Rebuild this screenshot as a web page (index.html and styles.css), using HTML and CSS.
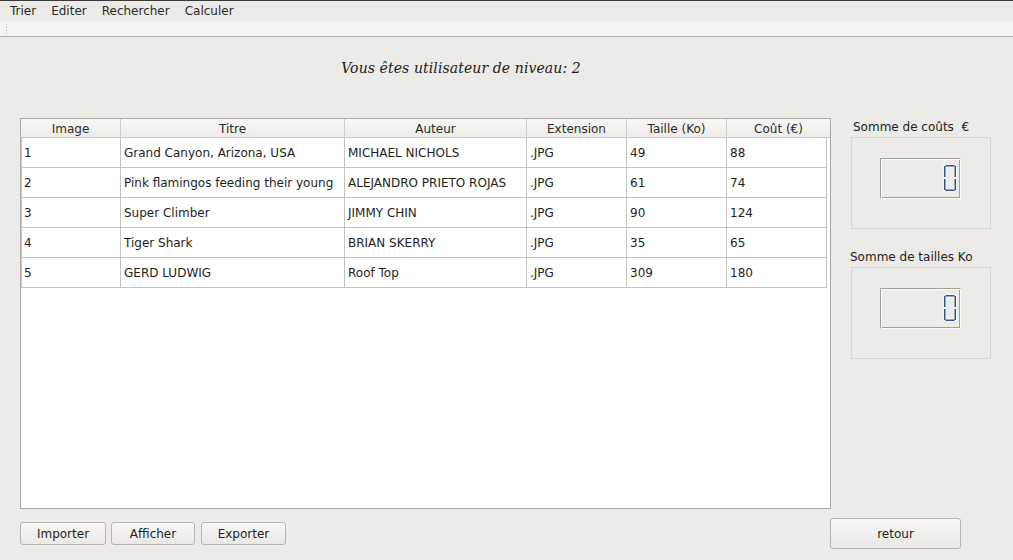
FILE: index.html
```html
<!DOCTYPE html>
<html lang="fr">
<head>
<meta charset="utf-8">
<title>Images</title>
<link rel="stylesheet" href="styles.css">
</head>
<body>
<div class="topline"></div>
<div class="menubar">
  <span class="menu">Trier</span>
  <span class="menu">Editer</span>
  <span class="menu">Rechercher</span>
  <span class="menu">Calculer</span>
</div>
<div class="toolbar"><div class="handle"></div></div>
<div class="main">
  <div class="heading">Vous êtes utilisateur de niveau: 2</div>
  <div class="content">
    <div class="frame">
      <div class="thead">
        <div class="th c1">Image</div>
        <div class="th c2">Titre</div>
        <div class="th c3">Auteur</div>
        <div class="th c4">Extension</div>
        <div class="th c5">Taille (Ko)</div>
        <div class="th c6">Coût (€)</div>
      </div>
      <div class="row"><div class="td c1">1</div><div class="td c2">Grand Canyon, Arizona, USA</div><div class="td c3">MICHAEL NICHOLS</div><div class="td c4">.JPG</div><div class="td c5">49</div><div class="td c6">88</div></div>
      <div class="row"><div class="td c1">2</div><div class="td c2">Pink flamingos feeding their young</div><div class="td c3">ALEJANDRO PRIETO ROJAS</div><div class="td c4">.JPG</div><div class="td c5">61</div><div class="td c6">74</div></div>
      <div class="row"><div class="td c1">3</div><div class="td c2">Super Climber</div><div class="td c3">JIMMY CHIN</div><div class="td c4">.JPG</div><div class="td c5">90</div><div class="td c6">124</div></div>
      <div class="row"><div class="td c1">4</div><div class="td c2">Tiger Shark</div><div class="td c3">BRIAN SKERRY</div><div class="td c4">.JPG</div><div class="td c5">35</div><div class="td c6">65</div></div>
      <div class="row"><div class="td c1">5</div><div class="td c2">GERD LUDWIG</div><div class="td c3">Roof Top</div><div class="td c4">.JPG</div><div class="td c5">309</div><div class="td c6">180</div></div>
    </div>
    <div class="side">
      <div class="label l1">Somme de coûts&nbsp; €</div>
      <div class="group">
        <div class="lcd">
          <svg class="digit" width="14" height="28" viewBox="0 0 14 28">
            <g fill="#f6f6f6">
              <rect x="1.5" y="0" width="11" height="3.5"/>
              <rect x="0" y="1" width="3.5" height="13"/>
              <rect x="10.5" y="1" width="3.5" height="13"/>
              <rect x="0" y="14" width="3.5" height="13"/>
              <rect x="10.5" y="14" width="3.5" height="13"/>
              <rect x="1.5" y="24.5" width="11" height="3.5"/>
            </g>
            <g fill="#2d5590">
              <rect x="2.5" y="1" width="9" height="1.5"/>
              <rect x="1" y="2" width="1.5" height="11"/>
              <rect x="11.5" y="2" width="1.5" height="11"/>
              <rect x="1" y="15" width="1.5" height="11"/>
              <rect x="11.5" y="15" width="1.5" height="11"/>
              <rect x="2.5" y="25.5" width="9" height="1.5"/>
            </g>
          </svg>
        </div>
      </div>
      <div class="label l2">Somme de tailles Ko</div>
      <div class="group">
        <div class="lcd">
          <svg class="digit" width="14" height="28" viewBox="0 0 14 28">
            <g fill="#f6f6f6">
              <rect x="1.5" y="0" width="11" height="3.5"/>
              <rect x="0" y="1" width="3.5" height="13"/>
              <rect x="10.5" y="1" width="3.5" height="13"/>
              <rect x="0" y="14" width="3.5" height="13"/>
              <rect x="10.5" y="14" width="3.5" height="13"/>
              <rect x="1.5" y="24.5" width="11" height="3.5"/>
            </g>
            <g fill="#2d5590">
              <rect x="2.5" y="1" width="9" height="1.5"/>
              <rect x="1" y="2" width="1.5" height="11"/>
              <rect x="11.5" y="2" width="1.5" height="11"/>
              <rect x="1" y="15" width="1.5" height="11"/>
              <rect x="11.5" y="15" width="1.5" height="11"/>
              <rect x="2.5" y="25.5" width="9" height="1.5"/>
            </g>
          </svg>
        </div>
      </div>
    </div>
  </div>
  <div class="bottom">
    <div class="btns">
      <button class="btn b1">Importer</button>
      <button class="btn b2">Afficher</button>
      <button class="btn b3">Exporter</button>
    </div>
    <button class="btn retour">retour</button>
  </div>
</div>
</body>
</html>
```

FILE: styles.css
```css
* { box-sizing: border-box; }
html, body { margin: 0; padding: 0; }
body {
  width: 1013px;
  height: 560px;
  overflow: hidden;
  background: #edebe7;
  font-family: "DejaVu Sans", sans-serif;
  font-size: 12px;
  color: #1e1e1e;
}
.topline { height: 1px; background: #3a3a3a; }
.menubar {
  height: 20px;
  display: flex;
  align-items: center;
  gap: 15px;
  padding-left: 10px;
  background: #edebe7;
}
.menu { color: #2a2a2a; }
.toolbar {
  height: 16px;
  background: #f5f3f0;
  border-bottom: 1px solid #b3afaa;
  padding: 2px 0 0 5px;
}
.handle {
  width: 3px;
  height: 11px;
  background-image: radial-gradient(circle, #b5b1ac 0.6px, transparent 0.7px);
  background-size: 3px 3px;
}
.main { display: flex; flex-direction: column; }
.heading {
  height: 81px;
  width: 922px;
  text-align: center;
  padding-top: 23px;
  font-family: "DejaVu Serif", serif;
  font-style: italic;
  font-size: 14px;
  letter-spacing: 0.1px;
  color: #1a1a1a;
}
.content { display: flex; height: 400px; }
.frame {
  margin-left: 20px;
  width: 811px;
  height: 391px;
  border: 1px solid #aca8a3;
  background: #fff;
}
.thead {
  display: flex;
  height: 19px;
  border-bottom: 1px solid #cbc7c2;
  background: linear-gradient(#f8f7f5, #eeece9);
}
.th {
  text-align: center;
  line-height: 18px;
  padding-top: 1px;
  border-right: 1px solid #d0ccc7;
  color: #2a2a2a;
}
.th.c6 { flex: 1; border-right: none; }
.row {
  display: flex;
  width: 806px;
  height: 30px;
  border-bottom: 1px solid #c4c4c4;
}
.td {
  line-height: 29px;
  padding-top: 1px;
  padding-left: 3px;
  border-right: 1px solid #c4c4c4;
  white-space: nowrap;
  overflow: hidden;
}
.td.c1 { border-left: 1px solid #c4c4c4; padding-left: 2px; }
.c1 { width: 100px; }
.c2 { width: 224px; }
.c3 { width: 182px; }
.c4 { width: 100px; }
.c5 { width: 100px; }
.c6 { width: 100px; }
.side {
  margin-left: 19px;
  width: 141px;
  display: flex;
  flex-direction: column;
}
.label { height: 19px; line-height: 18px; color: #222; }
.l1 { padding-left: 3px; }
.l2 { margin-top: 19px; padding-left: 0; }
.group {
  margin-left: 1px;
  width: 140px;
  height: 92px;
  border: 1px solid #d8d4cf;
  padding: 20px 0 0 28px;
}
.lcd {
  width: 81px;
  height: 41px;
  border: 1px solid;
  border-color: #a29e99 #fbfaf9 #fbfaf9 #a29e99;
  box-shadow: inset 1px 1px 0 #fbfaf9, inset -1px -1px 0 #a29e99;
  display: flex;
  justify-content: flex-end;
  align-items: flex-start;
  padding: 5px 3px 0 0;
}
.bottom {
  display: flex;
  justify-content: space-between;
  align-items: center;
  width: 961px;
  padding-left: 20px;
}
.btns { display: flex; gap: 5px; }
.btn {
  font-family: "DejaVu Sans", sans-serif;
  font-size: 12px;
  color: #1e1e1e;
  height: 23px;
  padding: 0;
  border: 1px solid #b8b4af;
  border-radius: 3px;
  background: linear-gradient(#f9f8f6, #ebe8e4);
}
.b1 { width: 86px; }
.b2 { width: 84px; }
.b3 { width: 85px; margin-left: 1px; }
.retour { width: 131px; height: 31px; }
```
